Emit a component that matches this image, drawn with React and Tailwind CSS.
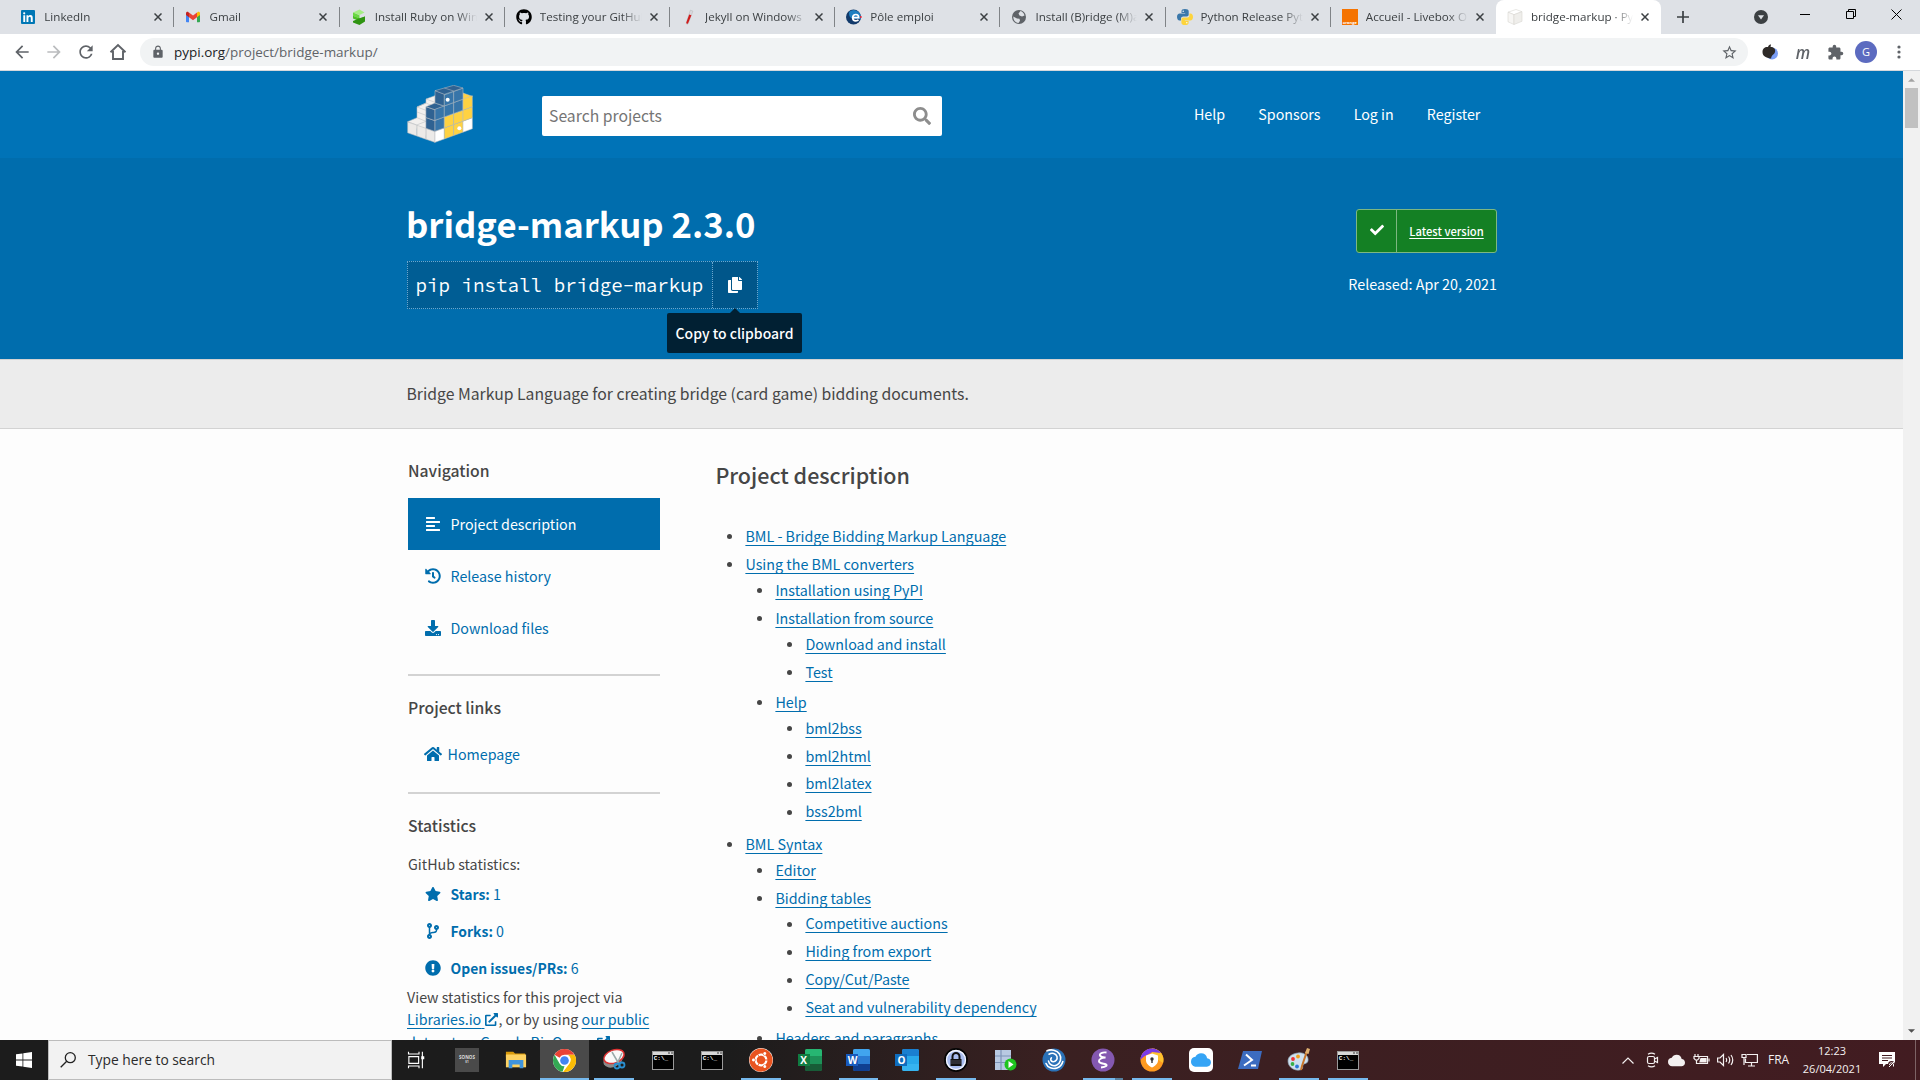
import React from "react";
import {
  FaAlignLeft, FaHistory, FaDownload, FaHome, FaStar, FaCodeBranch, FaExclamationCircle,
  FaExternalLinkAlt, FaSearch, FaCheck, FaCopy, FaGithub, FaUbuntu,
} from "react-icons/fa";
import { MdArrowBack, MdArrowForward, MdRefresh, MdLock, MdStarBorder, MdExtension, MdCloud } from "react-icons/md";

/* ---------- Browser chrome ---------- */

const LinkedIn = () => (
  <svg viewBox="0 0 16 16" className="size-4">
    <rect x="1" y="1" width="14" height="14" rx="1" fill="#0077b5" />
    <path d="M3.3 6.3h1.9V13H3.3zM4.2 3.2a1.1 1.1 0 110 2.2 1.1 1.1 0 010-2.2zM6.5 6.3h1.8v.9c.4-.7 1.1-1.1 2-1.1 1.9 0 2.4 1.2 2.4 3V13h-1.9V9.500c0-1-.2-1.700-1.100-1.700s-1.300.7-1.300 1.700V13H6.500z" fill="#fff" />
  </svg>
);
const Gmail = () => (
  <svg viewBox="0 0 16 16" className="size-4">
    <path d="M1 4v8.500a.8.800 0 00.8.800H4V7z" fill="#4285f4" />
    <path d="M15 4v8.500a.8.800 0 01-.8.800H12V7z" fill="#34a853" />
    <path d="M12 4v4.200l3-2.300V4.200c0-1.300-1.400-1.900-2.400-1.200z" fill="#fbbc04" />
    <path d="M4 4v4.200L1 5.900V4.200C1 2.900 2.400 2.300 3.400 3z" fill="#c5221f" />
    <path d="M4 8.200V3.500l4 3 4-3v4.700l-4 3z" fill="#ea4335" />
  </svg>
);
const RubyInstaller = () => (
  <svg viewBox="0 0 16 16" className="size-4">
    <path d="M2 3.500L8.500 .5l5 3-5 2.500z" fill="#a4ee84" />
    <path d="M2 3.500l6.500 2.700v3.300L2 6.800z" fill="#6ad842" />
    <path d="M2 6.800l7 2.700 5-2v3.300l-4 2L2 9.500z" fill="#4cc024" />
    <path d="M2 12l6.500-2.700L14 7.500v5L8.500 16 2 13.500z" fill="#2f9412" />
  </svg>
);
const Jekyll = () => (
  <svg viewBox="0 0 16 16" className="size-4">
    <path d="M9.300 1.200l2.600.9L7.300 14.500c-.6 1.300-2.500.6-2-.8z" fill="#d9d9de" stroke="#aaa" strokeWidth=".4" />
    <path d="M8.200 5.500l2.200.8-3.300 8c-.6 1-2.200.4-1.800-.7z" fill="#d01c1c" />
  </svg>
);
const PoleEmploi = () => (
  <svg viewBox="0 0 16 16" className="size-4">
    <circle cx="7.500" cy="8" r="7.500" fill="#123a6b" />
    <path d="M3.500 2.500a7 7 0 018.500 0c2 1.500 3.500 4 2.500 8C12 9 7 11 5 9 3 7 2.500 4.500 3.500 2.500z" fill="#1d7fc0" />
    <path d="M6.800 8.700h5.900c0-2-1.100-3.200-2.900-3.200-1.900 0-3.100 1.300-3.100 3.200 0 2 1.300 3.200 3.200 3.200 1.100 0 2-.4 2.600-1.100" fill="none" stroke="#fff" strokeWidth="1.700" />
    <circle cx="14.800" cy="8" r="1" fill="#e23" />
  </svg>
);
const Globe = () => (
  <svg viewBox="0 0 16 16" className="size-4">
    <circle cx="8" cy="8" r="7" fill="#5f6368" />
    <path d="M9.500 2c1.500.4 3.500 2 4 4.500L11 7.500 8.500 6.500 7.500 4.500zM2.200 7.500L6 9.500l2.500.3.500 2-1.500 2.200C4.500 13.700 2.200 11.500 2.200 7.500z" fill="#dee1e6" />
  </svg>
);
const Python = () => (
  <svg viewBox="0 0 16 16" className="size-4">
    <path d="M8 0C5.500 0 4.500.9 4.500 2.300V4h3.700v.6H2.800C1 4.600 0 6 0 8s1 3.400 2.500 3.400H4V9.600c0-1.300 1-2.200 2.300-2.200h3.500c1.100 0 1.900-.9 1.900-2V2.300C11.700.8 10.300 0 8 0z" fill="#3b78aa" />
    <path d="M8 16c2.500 0 3.600-.9 3.600-2.300V12H7.900v-.6h5.400C15 11.400 16 10 16 8s-1-3.400-2.500-3.400H12.400v1.800c0 1.300-1 2.200-2.300 2.200H6.300c-1.100 0-1.900.9-1.900 2v3.100C4.400 15.200 5.800 16 8 16z" fill="#fdd43c" />
    <circle cx="6.200" cy="2.200" r=".7" fill="#fff" /><circle cx="9.800" cy="13.800" r=".7" fill="#fff" />
  </svg>
);
const Orange = () => (
  <div className="flex size-4 items-end justify-center bg-[#f57300] text-[4px] leading-[5px] font-bold text-white">orange</div>
);
const PackageBox = () => (
  <svg viewBox="0 0 16 16" className="size-4" stroke="#d9d7d2" strokeWidth=".6">
    <path d="M1 3.200L9 .5l6 2.200-8 3z" fill="#fff" /><path d="M1 3.200l6 2.500v9.800L1 12.800z" fill="#f7f6f4" /><path d="M7 5.700l8-3v9.600l-8 3.200z" fill="#efeeeb" />
  </svg>
);

const tabs = [
  ["LinkedIn", LinkedIn], ["Gmail", Gmail], ["Install Ruby on Wind", RubyInstaller],
  ["Testing your GitHub", () => <FaGithub className="size-4 text-black" />],
  ["Jekyll on Windows |", Jekyll], ["Pôle emploi", PoleEmploi],
  ["Install (B)ridge (M)ar", Globe],
  ["Python Release Pyth", Python], ["Accueil - Livebox Or", Orange], ["bridge-markup · PyP", PackageBox],
];

const Close = () => (
  <svg viewBox="0 0 8 8" className="size-2" stroke="#3c4043" strokeWidth="1.500"><path d="M.5.5l7 7M7.500.5l-7 7" /></svg>
);

function TabStrip() {
  return (
    <div className="flex h-[34px] bg-[#dee1e6] pl-[9.300px]">
      {tabs.map(([label, Icon], i) => {
        const active = i === 9;
        return (
          <div key={label} className={`relative flex h-full w-[165.200px] shrink-0 items-center pl-[11px] ${active ? "rounded-t-lg bg-white" : ""}`}>
            <span className="flex w-4 shrink-0 justify-center"><Icon /></span>
            <span className="ml-2 w-[102px] overflow-hidden mask-r-from-80% mask-r-to-100% text-[11.600px] leading-4 whitespace-nowrap text-[#3c4043]">{label}</span>
            <span className="ml-2"><Close /></span>
            {i < 8 && <span className="absolute right-0 top-[7px] h-5 w-px bg-[#808387]" />}
          </div>
        );
      })}
      <div className="ml-4 flex items-center">
        <svg viewBox="0 0 12 12" className="size-3" stroke="#3c4043" strokeWidth="1.700"><path d="M6 0v12M0 6h12" /></svg>
      </div>
      <div className="mr-[18px] flex flex-1 items-center justify-end">
        <svg viewBox="0 0 14 14" className="mr-8 size-[14px]"><circle cx="7" cy="7" r="7" fill="#3c4043" /><path d="M4 5.300h6L7 9.500z" fill="#dee1e6" /></svg>
        <span className="mr-9 mb-[5px] h-px w-[10px] bg-black" />
        <svg viewBox="0 0 10 10" className="mr-[35px] mb-[6px] size-[10px]" fill="none" stroke="#000"><path d="M.5 2.500h7v7h-7zM2.500 2.500v-2h7v7h-2" /></svg>
        <svg viewBox="0 0 11 11" className="mb-[6px] size-[11px]" stroke="#000"><path d="M.5.5l10 10M10.500.5l-10 10" /></svg>
      </div>
    </div>
  );
}

function Toolbar() {
  return (
    <div className="flex h-[37px] items-center border-b border-[#d5d8dc] bg-white pl-[12px] text-[#5f6368]">
      <MdArrowBack className="size-5" />
      <MdArrowForward className="ml-[12px] size-5 text-[#babcbe]" />
      <MdRefresh className="ml-[12px] size-5" />
      <svg viewBox="0 0 18 18" className="ml-[13px] size-[18px]" fill="none" stroke="currentColor" strokeWidth="1.900"><path d="M1.500 9.200L9 2l7.500 7.200M4 8v8h10V8" /></svg>
      <div className="ml-[13px] flex h-7 w-[1608px] items-center rounded-full bg-[#f1f3f4] pr-[10px] pl-[11px]">
        <MdLock className="size-[14px]" />
        <span className="ml-[9px] text-[13.480px] leading-5"><span className="text-[#202124]">pypi.org</span>/project/bridge-markup/</span>
        <MdStarBorder className="ml-auto size-[17px]" />
      </div>
      <svg viewBox="0 0 16 16" className="ml-[14px] size-4"><circle cx="10" cy="9.500" r="6" fill="#7a9df5" /><path d="M.5 8C.5 4 3.500 2.500 6 3c.5-2 2-2.500 3-2.500L8.500 3c3 0 5.500 2 4.500 5-1 3-3 2-4 6.500C4 14 .5 12 .5 8z" fill="#2e2a28" /></svg>
      <span className="ml-[17px] w-4 text-center text-[18px] leading-5 font-semibold italic"><span className="-ml-px inline-block scale-x-90">m</span></span>
      <MdExtension className="ml-[16px] size-[17px]" />
      <span className="ml-[11px] flex size-[22px] items-center justify-center rounded-full bg-[#5c6bc0] text-[11px] text-white">G</span>
      <svg viewBox="0 0 4 14" className="ml-[20px] h-[14px] w-1" fill="currentColor"><circle cx="2" cy="2" r="1.600" /><circle cx="2" cy="7" r="1.600" /><circle cx="2" cy="12" r="1.600" /></svg>
    </div>
  );
}

/* ---------- PyPI page ---------- */

const rightFace = (col, row) => {
  const x = 104 + col * 28, y = 188 - col * 10.2 - row * 33;
  return `${x},${y} ${x + 28},${y - 10.2} ${x + 28},${y - 43.2} ${x},${y - 33}`;
};
const leftFace = (col, row) => {
  const x = 104 - col * 27.300, y = 188 - col * 9.500 - row * 32.500;
  return `${x},${y} ${x - 27.300},${y - 9.500} ${x - 27.300},${y - 42} ${x},${y - 32.500}`;
};
const W = "#ffffff", Y = "#ffd242", B = "#3775a9";
const rightColors = [[W, B, B], [Y, Y, B, B], [Y, Y, B, B], [W, Y, Y]];

function Logo() {
  return (
    <svg viewBox="21 16 196 174" className="mb-px h-[58px] w-[66px]" stroke="#b9bcc0" strokeWidth="1.600" strokeLinejoin="round">
      <path d="M22 126l28-12V82l27-12V58l27-10v70l28 20-28 50z" fill="#f2f0ee" />
      <path d="M22 126l27 10 28-11M50 82l27 10 27-10M50 97l27 10M77 58l27 10M50 114l27 11M50 82l27-12 27 12" fill="none" />
      {[0, 1, 2].map((c) => <polygon key={c} points={leftFace(c, 0)} fill="#eceae8" />)}
      {[1, 2].map((r) => <polygon key={r} points={leftFace(0, r)} fill="#2f6292" />)}
      <polygon points="77,81 104,90 132,80 104,70" fill="#2f6292" />
      <polygon points="104,33 132,43 132,79 104,70" fill="#2f6292" />
      <polygon points="188,57 188,40 216,50 188,62" fill={Y} />
      {rightColors.map((rows, c) => rows.map((f, r) => <polygon key={`${c}-${r}`} points={rightFace(c, r)} fill={f} />))}
      <polygon points="104,33 132,44 188,25 160,17" fill="#2f6292" />
      <path d="M132 25l28 9" fill="none" />
      <circle cx="142" cy="60" r="6" fill="#fff" stroke="none" />
      <circle cx="177" cy="146" r="6" fill="#fff" stroke="none" />
    </svg>
  );
}

function SiteHeader() {
  return (
    <header className="flex h-[87px] items-center bg-[#0073b7] pl-[406.500px] text-white">
      <Logo />
      <div className="mt-[3px] ml-[69px] flex h-10 w-[400px] items-center justify-between rounded-xs bg-white pr-[11px] pl-[7.500px] text-[15.740px] text-[#757575]">
        <span className="leading-6">Search projects</span>
        <FaSearch className="size-[18px] text-[#8d8d8d]" />
      </div>
      <nav className="mb-[2px] ml-[252.500px] flex gap-[33.200px] text-[14.250px] leading-6">
        {["Help", "Sponsors", "Log in", "Register"].map((l) => <a key={l}>{l}</a>)}
      </nav>
    </header>
  );
}

function Banner() {
  return (
    <section className="flex h-[201px] justify-between bg-[#006dad] pr-[406px] pl-[407px] text-white">
      <div className="pt-[41px]">
        <h1 className="-ml-px text-[34.700px] leading-[49px] font-bold whitespace-nowrap">bridge-markup 2.3.0</h1>
        <div className="mt-[13px] flex h-12 w-[351px] border border-dotted border-[#6ba7cf] bg-[#005d94] font-['Source_Code_Pro','Liberation_Mono',monospace]">
          <span className="w-[304px] pl-[7.500px] text-[19.200px] leading-[46px] whitespace-nowrap">pip install bridge-markup</span>
          <span className="relative flex flex-1 items-center justify-center border-l border-dotted border-[#6ba7cf] bg-[#00568a]">
            <FaCopy className="mr-px size-4" />
            <span className="absolute top-[51px] -right-[45px] h-10 w-[135px] rounded-xs bg-[#012033] text-center font-['Noto_Sans_CJK_SC',sans-serif] text-[13.980px] leading-10 font-medium">
              <span className="absolute -top-[5px] left-1/2 -translate-x-1/2 border-x-[5px] border-b-[5px] border-x-transparent border-b-[#012033]" />
              Copy to clipboard
            </span>
          </span>
        </div>
      </div>
      <div className="flex flex-col items-end pt-[51px]">
        <div className="flex h-11 w-[141px] rounded-[3px] border border-[#7db781] bg-[#148024]">
          <span className="flex w-10 items-center justify-center border-r border-[#7db781]"><FaCheck className="mb-[2px] size-[14px]" /></span>
          <span className="flex-1 text-center text-[11.190px] leading-[43px] font-medium underline underline-offset-2 [text-decoration-skip-ink:none]">Latest version</span>
        </div>
        <p className="mt-[19px] text-[14.330px] leading-6">Released: Apr 20, 2021</p>
      </div>
    </section>
  );
}

const navItems = [["Project description", FaAlignLeft], ["Release history", FaHistory], ["Download files", FaDownload]];
const stats = [["Stars:", "1", FaStar], ["Forks:", "0", FaCodeBranch], ["Open issues/PRs:", "6", FaExclamationCircle]];

const Heading = ({ children, className = "" }) => <h3 className={`text-[15.740px] leading-6 font-medium ${className}`}>{children}</h3>;
const External = ({ children }) => (
  <a className="text-[#006dad] underline underline-offset-[3px] [text-decoration-skip-ink:none]">{children} <FaExternalLinkAlt className="ml-px inline size-[13px] align-[-1px]" /></a>
);

function Sidebar() {
  return (
    <aside className="w-[252px] shrink-0 pt-[30px] text-[14.280px] whitespace-nowrap">
      <Heading>Navigation</Heading>
      <nav className="mt-[15px]">
        {navItems.map(([label, Icon], i) => (
          <a key={label} className={`flex h-[52px] items-center pl-[16.500px] ${i === 0 ? "bg-[#006dad] text-white" : "text-[#006dad]"}`}>
            <Icon className="size-4" /><span className="ml-[10px] leading-6">{label}</span>
          </a>
        ))}
      </nav>
      <div className="mt-5 h-[2px] bg-[#d3d3d3]" />
      <Heading className="mt-5">Project links</Heading>
      <a className="mt-2 mb-3 flex h-[52px] items-center pl-[15.500px] text-[#006dad]"><FaHome className="size-[18px]" /><span className="ml-[6px] leading-6">Homepage</span></a>
      <div className="h-[2px] bg-[#d3d3d3]" />
      <Heading className="mt-5">Statistics</Heading>
      <p className="mt-[14px] leading-6">GitHub statistics:</p>
      <div className="-mt-px text-[#006dad]">
        {stats.map(([label, value, Icon]) => (
          <a key={label} className="flex h-[37px] items-center pl-[16.500px]"><Icon className="size-4" /><span className="ml-[10px] leading-6"><b className="text-[13.900px]">{label}</b> {value}</span></a>
        ))}
      </div>
      <p className="-ml-px leading-[22.400px]">
        View statistics for this project via<br />
        <External>Libraries.io</External>, or by using <a className="text-[#006dad] underline underline-offset-[3px] [text-decoration-skip-ink:none]">our public</a><br />
        <External>dataset on Google BigQuery</External>
      </p>
    </aside>
  );
}

const toc = [
  ["BML - Bridge Bidding Markup Language"],
  ["Using the BML converters", [
    ["Installation using PyPI"],
    ["Installation from source", [["Download and install"], ["Test"]]],
    ["Help", [["bml2bss"], ["bml2html"], ["bml2latex"], ["bss2bml"]]],
  ]],
  ["BML Syntax", [
    ["Editor"],
    ["Bidding tables", [["Competitive auctions"], ["Hiding from export"], ["Copy/Cut/Paste"], ["Seat and vulnerability dependency"]]],
    ["Headers and paragraphs"],
  ]],
];

const TocList = ({ items }) => (
  <ul className="flow-root">
    {items.map(([label, children]) => (
      <li key={label} className="pb-[2.200px] pl-[30px]">
        <div className="flex h-[25.800px] items-center">
          <span className="-ml-[18px] mt-[2px] mr-[13px] size-[5px] rounded-full bg-[#464646]" />
          <a className="leading-[25.800px] text-[#006dad] underline underline-offset-[3px] [text-decoration-skip-ink:none]">{label}</a>
        </div>
        {children && <TocList items={children} />}
      </li>
    ))}
  </ul>
);

function Page() {
  return (
    <div className="flex h-[969px] font-['Noto_Sans_CJK_SC','Noto_Sans',sans-serif] text-[#464646]">
      <div className="h-full w-[1903px] overflow-hidden bg-[#fdfdfd]">
        <SiteHeader />
        <Banner />
        <p className="h-[70px] border-y border-[#d3d3d3] bg-[#ececec] pl-[406.500px] text-[15.760px] leading-[68px]">
          Bridge Markup Language for creating bridge (card game) bidding documents.
        </p>
        <div className="flex pl-[408px]">
          <Sidebar />
          <main className="ml-[55.400px] pt-[30px]">
            <h2 className="text-[21.480px] leading-8 font-medium">Project description</h2>
            <div className="mt-8 text-[14.320px]"><TocList items={toc} /></div>
          </main>
        </div>
      </div>
      <div className="flex h-full w-[17px] flex-col items-center justify-between bg-[#f1f1f1]">
        <div className="flex flex-col items-center">
          <svg viewBox="0 0 8 4" className="mt-[7px] h-1 w-[7px]" fill="#a3a3a3"><path d="M0 4l4-4 4 4z" /></svg>
          <span className="mt-[6px] h-10 w-[13px] bg-[#c1c1c1]" />
        </div>
        <svg viewBox="0 0 8 4" className="mb-[7px] h-1 w-[7px]" fill="#505050"><path d="M0 0l4 4 4-4z" /></svg>
      </div>
    </div>
  );
}

/* ---------- Windows taskbar ---------- */

const Svg = ({ children, className = "size-6" }) => <svg viewBox="0 0 24 24" className={className}>{children}</svg>;

const TaskView = () => (
  <Svg className="size-[18px]"><path d="M2 1v3h14V1M2 23v-3h14v3M2.500 7.500h13v9h-13zM20.500 1v22" fill="none" stroke="#fff" strokeWidth="1.500" /><path d="M19 7h4v4h-4z" fill="#fff" /></Svg>
);
const Sonos = () => <div className="flex size-6 flex-col items-center justify-center bg-[#4a4a4a] text-[4.500px] leading-[5px] font-bold text-[#ddd]"><span>SONOS</span><span className="text-[3px]">S1</span></div>;
const Explorer = () => (
  <Svg className="size-[22px]"><path d="M1 3h8l2 2h11v4H1z" fill="#d99a0b" /><path d="M1 6h22v14H1z" fill="#fdd262" /><path d="M4 21v-9h16v9h-4v-4H8v4z" fill="#3f94dc" /></Svg>
);
const Chrome = () => (
  <Svg className="size-[23px]"><circle cx="12" cy="12" r="12" fill="#fff" /><path d="M12 0a12 12 0 0110.400 6H12a6 6 0 00-5.200 3L1.600 6A12 12 0 0112 0z" fill="#ea4335" /><path d="M1.600 6l5.200 9A6 6 0 0012 18l-2 5.800A12 12 0 011.600 6z" fill="#34a853" /><path d="M22.400 6A12 12 0 0110.500 23.900L17.200 15A6 6 0 0015.500 6z" fill="#fbbc05" /><circle cx="12" cy="12" r="5.600" fill="#fff" /><circle cx="12" cy="12" r="4.500" fill="#4285f4" /></Svg>
);
const Snip = () => (
  <Svg><ellipse cx="11" cy="12" rx="10" ry="7" transform="rotate(-25 11 12)" fill="#8b8b8b" /><ellipse cx="12" cy="8.500" rx="10.500" ry="6.500" transform="rotate(-20 12 8.500)" fill="#fafafa" stroke="#d33" strokeWidth="1.500" /><path d="M10 4l7 12M20 5l-5 11" stroke="#9aa" strokeWidth="1.500" /><circle cx="15" cy="18" r="2.500" fill="none" stroke="#2a8fd0" strokeWidth="1.800" /><circle cx="20" cy="17" r="2.500" fill="none" stroke="#2a8fd0" strokeWidth="1.800" /></Svg>
);
const Cmd = () => (
  <div className="flex h-[19px] w-[22px] flex-col border border-[#9a9a9a] bg-black">
    <span className="flex h-[3px] justify-end gap-px bg-[#d8d8d8]"><i className="size-[2px] bg-[#888]" /><i className="size-[2px] bg-[#888]" /></span>
    <span className="pl-px font-['Liberation_Mono',monospace] text-[6px] leading-[8px] font-bold text-white">C:\_</span>
  </div>
);
const Ubuntu = () => <span className="flex size-6 items-center justify-center rounded-full bg-white"><FaUbuntu className="size-6 text-[#e95420]" /></span>;
const Office = ({ letter, a, b, d, c }) => (
  <div className="relative flex h-[22px] w-6 justify-end">
    <div className={`flex h-full w-[17px] flex-col justify-between overflow-hidden rounded-xs ${b}`}><div className={`h-[7px] ${a}`} /><div className={`h-[7px] ${d}`} /></div>
    <span className={`absolute top-[5px] left-0 flex size-3 items-center justify-center text-[10px] leading-none font-bold text-white ${c}`}>{letter}</span>
  </div>
);
const Excel = () => <Office letter="X" a="bg-[#27b672]" b="bg-[#1d9158]" d="bg-[#185c37]" c="bg-[#107c41]" />;
const Word = () => <Office letter="W" a="bg-[#41a5ee]" b="bg-[#2b7cd3]" d="bg-[#103f91]" c="bg-[#185abd]" />;
const Outlook = () => <Office letter="O" a="bg-[#1a7fd0]" b="bg-[#28a8ea]" d="bg-[#36b4f0]" c="bg-[#0f6cbd]" />;
const KeePass = () => (
  <Svg><circle cx="12" cy="12" r="11" fill="#a9bdf0" stroke="#050505" strokeWidth="1.800" /><circle cx="12" cy="12" r="9.500" fill="none" stroke="#f5f7ff" strokeWidth="1.300" /><path d="M6.500 11h11v7h-11z" fill="#111" /><path d="M8.500 11V8.500a3.500 3.500 0 017 0V11" fill="none" stroke="#111" strokeWidth="2" /><path d="M7 13h10M7 15h10" stroke="#667" strokeWidth=".7" /></Svg>
);
const Server = () => (
  <Svg><path d="M2 2h16v20H2z" fill="#b8c9e2" /><path d="M2 8h16M2 14.500h16M8 2v20" stroke="#7d93b8" strokeWidth="1.200" /><circle cx="17.500" cy="16.500" r="6" fill="#1fc41f" /><path d="M15.500 13l5 3.500-5 3.500z" fill="#fff" /></Svg>
);
const Swirl = () => (
  <Svg>
    <circle cx="12" cy="12" r="11.500" fill="#2a72b8" />
    <path d="M5 2.800C9 1 15 2 17.500 6c2.500 4 1 9.500-3 11.200-3.500 1.400-7.500-.6-8-4.200M7 6.200c3-1.800 7-1 8 2.300.8 3-1.500 5.500-4 5.200-2.200-.3-3-2.600-1.600-3.900M4 15.500c1.500 4 6.500 6 11 4.500 3-1 5-3.500 5.800-6.500" fill="none" stroke="#fff" strokeWidth="1.600" strokeLinecap="round" />
  </Svg>
);
const Emacs = () => (
  <Svg><circle cx="12" cy="12" r="11.500" fill="#8458b0" /><path d="M15.500 4.500c-4-.5-7.500 1-6.500 3s4 1.800 5.500 2c-4 .2-7 1.800-6.500 4s4.500 2 7 2.800c1.500.8.500 2.700-5 3.200" fill="none" stroke="#fff" strokeWidth="1.900" /></Svg>
);
const Avast = () => (
  <Svg><circle cx="12" cy="12" r="11.500" fill="#ff9a1f" /><path d="M12 .5A11.500 11.500 0 0123 15L12 8z" fill="#ffc22e" /><path d="M12 .5A11.500 11.500 0 00.5 12c4-5 8-5 11.500-8l9 1A11.500 11.500 0 0012 .5z" fill="#7a3ce8" /><path d="M12 5.500l6 2v5c0 3-3 5.500-6 7-3-1.500-6-4-6-7v-5z" fill="#fff" /><circle cx="12" cy="11" r="1.700" fill="#333" /><path d="M11.300 11h1.400v4h-1.400z" fill="#333" /></Svg>
);
const ICloud = () => <span className="flex size-6 items-center justify-center rounded-[5px] bg-white"><MdCloud className="size-5 text-[#35a4f5]" /></span>;
const PowerShell = () => (
  <Svg><path d="M5 3h19l-4 18H0z" fill="#3c6cc0" /><path d="M8 6.500l6 5.500-8 5.500M13 17.500h5" fill="none" stroke="#fff" strokeWidth="2" /></Svg>
);
const Paint = () => (
  <Svg><path d="M11 5c6-1 11 3 10 8-.6 3-4 2-5 4s1 4-3 5C7 23 1 19 1 13c0-5 5-7.500 10-8z" fill="#cfe0ee" stroke="#8da5b8" strokeWidth=".7" /><circle cx="6" cy="11" r="1.900" fill="#e33" /><circle cx="11" cy="8.500" r="1.900" fill="#f0a020" /><circle cx="5.500" cy="16" r="1.900" fill="#38b048" /><circle cx="10" cy="18.500" r="1.900" fill="#2b78d8" /><path d="M20 3l-5 15-1 4" stroke="#c8752a" strokeWidth="2" fill="none" /><path d="M18 5l2-5 3 1-1.500 5z" fill="#e0b070" /></Svg>
);

const apps = [
  [Sonos], [Explorer], [Chrome, "active"], [Snip, "open"], [Cmd], [Cmd], [Ubuntu, "open"], [Excel], [Word, "open"], [Outlook],
  [KeePass, "open"], [Server], [Swirl], [Emacs, "stack"], [Avast, "open"], [ICloud], [PowerShell], [Paint, "open"], [Cmd, "open"],
];

function Taskbar() {
  return (
    <div className="flex h-10 bg-linear-to-r from-[#1c1c1c] from-38% via-[#3a2021] via-55% to-[#421c21] text-white">
      <div className="flex w-12 items-center justify-center pr-px">
        <svg viewBox="0 0 16 16" className="size-4" fill="#fff"><path d="M0 2.300l6.500-.9v6.100H0zM7.300 1.300L16 0v7.500H7.300zM0 8.400h6.500v6.200L0 13.700zM7.300 8.400H16V16l-8.700-1.300z" /></svg>
      </div>
      <div className="flex w-[344px] items-center border border-[#bcbcbc] bg-[#f2f2f2] pl-[11px] text-[13.800px] text-[#2b2b2b]">
        <svg viewBox="0 0 16 16" className="size-4" fill="none" stroke="#222" strokeWidth="1.300"><circle cx="10.300" cy="5.700" r="5" /><path d="M6.700 9.300L.7 15.300" /></svg>
        <span className="mt-px ml-[12px]">Type here to search</span>
      </div>
      <div className="flex w-[50.500px] items-center justify-center pr-[3px]"><TaskView /></div>
      {apps.map(([Icon, state], i) => (
        <div key={i} className={`relative flex h-10 w-[48.950px] shrink-0 items-center justify-center ${state === "active" ? "bg-[#4a4a4a]" : ""}`}>
          <Icon />
          {state === "active" && <span className="absolute inset-x-0 bottom-0 h-[2px] bg-[#76b9ed]" />}
          {(state === "open" || state === "stack") && <span className="absolute inset-x-[4.500px] bottom-0 flex h-[2px] bg-[#76b9ed]">{state === "stack" && <i className="ml-auto w-2 bg-[#56809f]" />}</span>}
        </div>
      ))}
      <div className="ml-auto flex items-center text-[#f4f0f0]">
        <svg viewBox="0 0 12 7" className="h-[7px] w-3" fill="none" stroke="currentColor" strokeWidth="1.200"><path d="M.5 6.500L6 1l5.500 5.500" /></svg>
        <svg viewBox="0 0 16 16" className="ml-[10px] size-4" fill="none" stroke="currentColor" strokeWidth="1.200"><rect x="3.500" y="4.500" width="7" height="7" rx="1.500" /><path d="M10.500 7l3-1.500v5L10.500 9M4 2.300q3.500-2.300 7 0M4 13.700q3.500 2.300 7 0" /></svg>
        <MdCloud className="ml-2 size-[17px]" />
        <svg viewBox="0 0 17 14" className="ml-2 h-[14px] w-[17px]" fill="none" stroke="currentColor" strokeWidth="1.200"><path d="M6.500 3.500h8v7h-9M2 1v2.500M5 1v2.500M1 3.500h5v2L4.500 7h-2L1 5.500zM3.500 7v3.500h3" /><path d="M8 5.500h5v3.500H7z" fill="currentColor" /><path d="M16 5.500v3" /></svg>
        <svg viewBox="0 0 17 14" className="ml-[7px] h-[14px] w-[17px]" fill="none" stroke="currentColor" strokeWidth="1.200"><path d="M.6 5h2.400L6.500 1.500v11L3 9H.6zM9 5q1.300 2 0 4M11.500 3.500q2.500 3.500 0 7M14 2q3.500 5 0 10" /></svg>
        <svg viewBox="0 0 17 14" className="ml-[7px] h-[14px] w-[17px]" fill="none" stroke="currentColor" strokeWidth="1.200"><path d="M6 1.500h10.400v8H4.500V5.500M1 1.500h4v3H1zM3 4.500V12M7 13h7M10.500 9.500V13" /></svg>
        <span className="ml-[10px] w-[22px] text-[12px]">FRA</span>
        <div className="-mt-px ml-3 w-[60px] text-center text-[11px] leading-[18px]">12:23<br />26/04/2021</div>
        <svg viewBox="0 0 17 17" className="ml-[17px] size-[17px]"><path d="M0 0h16v12H7l-3 3v-3H0z" fill="#fff" /><path d="M3 3.500h10M3 6h10M3 8.500h6" stroke="#421c21" /><circle cx="12.500" cy="12.500" r="3.500" fill="#421c21" /><path d="M10 15l5-5M10.500 13c0-3 4-3 4 0v1.500" stroke="#fff" fill="none" /></svg>
        <span className="ml-[19px] mr-1 h-10 w-px bg-[#7d6365]" />
      </div>
    </div>
  );
}

export default function App() {
  return (
    <div className="h-[1080px] w-[1920px] overflow-hidden font-['Open_Sans','Noto_Sans',sans-serif]">
      <TabStrip />
      <Toolbar />
      <Page />
      <Taskbar />
    </div>
  );
}
